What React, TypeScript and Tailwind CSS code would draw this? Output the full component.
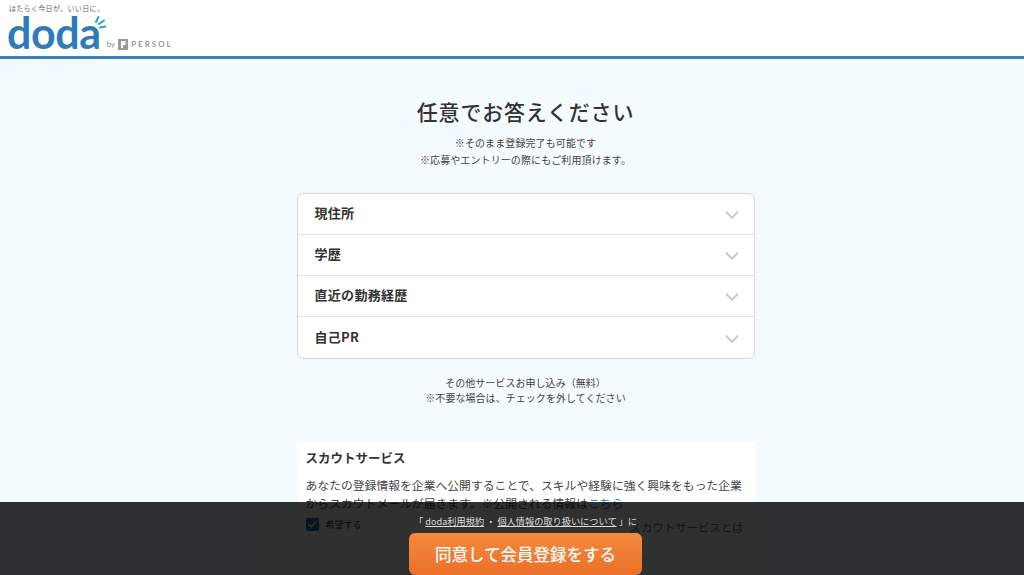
import { ChevronDown, Check } from "lucide-react";

const items = ["現住所", "学歴", "直近の勤務経歴", "自己PR"];

const font = "font-['Noto_Sans_CJK_JP','Noto_Sans',sans-serif]";

function Logo() {
  return (
    <div className="flex h-[56px] w-[200px] flex-col pl-[9px]">
      <div className="mt-[3px] text-[7px] leading-[10px] tracking-[0.35px] text-[#666]">
        はたらく今日が、いい日に。
      </div>
      <div className="relative mt-[1px] flex items-end">
        <span className="ml-[-2px] font-['Lato',sans-serif] text-[43px] font-bold leading-[38px] tracking-[-0.4px] text-[#2f7cb8]">
          doda
        </span>
        <svg className="absolute left-[84px] top-[1px]" width="14" height="14" viewBox="0 0 14 14" fill="none" stroke="#2f9fd0" strokeWidth="2" strokeLinecap="round">
          <path d="M3 7 L5.5 2" />
          <path d="M6 9 L11 5.5" />
          <path d="M7 12.5 L12.5 11.5" />
        </svg>
        <div className="mb-[2px] ml-[6px] flex items-center font-['Lato',sans-serif] text-[8px] text-[#8a8a8a]">
          <span className="mr-[3px]">by</span>
          <svg width="10" height="11" viewBox="0 0 10 11" className="mr-[3px]">
            <rect width="10" height="11" fill="#9a9a9a" />
            <path d="M3 2h4.5v4H5v3H3z" fill="#fff" />
          </svg>
          <span className="font-semibold tracking-[2px]">PERSOL</span>
        </div>
      </div>
    </div>
  );
}

export default function App() {
  return (
    <div className={`relative h-[575px] w-[1024px] overflow-hidden bg-[#f4fbff] text-[#333] ${font}`}>
      <header className="h-[59px] border-b-[3px] border-[#3b82bd] bg-white">
        <Logo />
      </header>

      <main className="flex flex-col items-center pl-[27px]">
        <h1 className="mt-[36px] text-[21px] font-medium leading-[32px] tracking-[0.8px] text-[#333]">
          任意でお答えください
        </h1>
        <div className="mt-[7px] text-center text-[10px] leading-[17px] tracking-[0.1px] text-[#444]">
          <p>※そのまま登録完了も可能です</p>
          <p>※応募やエントリーの際にもご利用頂けます。</p>
        </div>

        <div className="mt-[25px] w-[458px] divide-y divide-[#e3e3e3] rounded-[6px] border border-[#d9d9d9] bg-white">
          {items.map((label) => (
            <div key={label} className="flex h-[41.1px] items-center justify-between pb-[2px] pl-[17px] pr-[11px]">
              <span className="text-[13px] font-bold tracking-[0.3px] text-[#333]">{label}</span>
              <ChevronDown size={22} strokeWidth={2.4} className="mt-[4px] text-[#cccccc]" />
            </div>
          ))}
        </div>

        <div className="mt-[16px] text-center text-[10px] leading-[15px] tracking-[0.05px] text-[#444]">
          <p>その他サービスお申し込み（無料）</p>
          <p>※不要な場合は、チェックを外してください</p>
        </div>

        <section className="mt-[37px] h-[115px] w-[458px] bg-white px-[9px] pt-[6px]">
          <h2 className="text-[12.5px] font-bold leading-[20px] text-[#333]">スカウトサービス</h2>
          <p className="mt-[8px] text-[11.8px] leading-[18px] tracking-[0.02px] text-[#444]">
            あなたの登録情報を企業へ公開することで、スキルや経験に強く興味をもった企業からスカウトメールが届きます。※公開される情報は<span className="text-[#2f7cb8]">こちら</span>
          </p>
          <div className="mt-[1px] flex items-center justify-between">
            <label className="flex items-center gap-[7px] text-[9px]">
              <span className="flex h-[13px] w-[13px] items-center justify-center rounded-[2px] bg-[#2f6fa8]">
                <Check size={11} strokeWidth={3.5} className="text-white" />
              </span>
              希望する
            </label>
            <span className="mr-[2px] mt-[6px] text-[11.4px] text-[#2f7cb8]">スカウトサービスとは</span>
          </div>
        </section>
      </main>

      <div className="absolute inset-x-0 bottom-0 flex h-[73px] flex-col items-center bg-[#000000cf] pl-[27px]">
        <p className="mt-[13px] text-[9.2px] leading-[13px] text-[#ddd]">
          「 <span className="underline">doda利用規約</span> ・ <span className="underline">個人情報の取り扱いについて</span> 」に
        </p>
        <button type="button" className="mt-[5px] h-[42px] w-[233px] shrink-0 rounded-[6px] bg-gradient-to-b from-[#f58a3f] to-[#ec6f27] text-[16.5px] font-medium text-white">
          同意して会員登録をする
        </button>
      </div>
    </div>
  );
}
